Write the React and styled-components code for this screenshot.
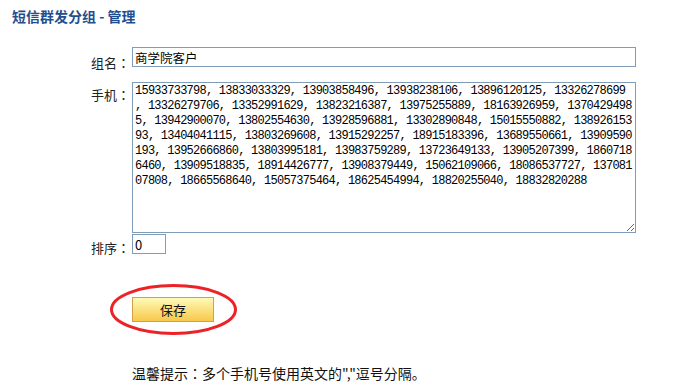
import React from "react";
import styled, { createGlobalStyle } from "styled-components";

const GlobalStyle = createGlobalStyle`
  html, body { margin: 0; padding: 0; background: #fff; }
  body { font-family: "Noto Sans CJK SC", "Noto Sans", sans-serif; color: #222; }
`;

const Page = styled.div`
  width: 692px;
  height: 386px;
  box-sizing: border-box;
  padding-top: 6px;
  overflow: hidden;
`;

const Title = styled.h1`
  margin: 0;
  padding-left: 12px;
  font-size: 14px;
  line-height: 21px;
  font-weight: bold;
  color: #1f4f8f;
`;

const Form = styled.form`
  margin-top: 20px;
  display: flex;
  flex-direction: column;
`;

const Row = styled.div`
  display: flex;
  align-items: flex-start;
  margin-top: ${(p) => p.$gap || 0}px;
`;

const Label = styled.label`
  box-sizing: border-box;
  flex: 0 0 132px;
  padding-right: 2px;
  padding-top: ${(p) => p.$offset || 0}px;
  text-align: right;
  font-size: 13px;
  line-height: 16px;
  color: #222;
`;

const Colon = styled.span`
  font-family: "Noto Sans CJK JP", "Noto Sans CJK SC", sans-serif;
`;

const TextField = styled.input`
  box-sizing: border-box;
  display: block;
  width: ${(p) => p.$w}px;
  height: 20px;
  margin: 0;
  padding: 0 2px;
  border: 1px solid #7f9db9;
  font-family: "Noto Sans CJK SC", sans-serif;
  font-size: ${(p) => p.$size || 12.5}px;
  color: #000;
  outline: none;
  background: #fff;
`;

const Numbers = styled.textarea`
  box-sizing: border-box;
  display: block;
  width: 504px;
  height: 151px;
  margin: 0;
  padding: 1px 2px;
  border: 1px solid #7f9db9;
  font-family: "Liberation Mono", monospace;
  font-size: 12px;
  letter-spacing: -0.75px;
  line-height: 15px;
  color: #000;
  white-space: pre;
  overflow: hidden;
  outline: none;
  background: #fff;
`;

const ButtonRow = styled.div`
  padding-left: 132px;
  margin-top: 40px;
`;

const Highlight = styled.div`
  position: relative;
  display: inline-block;
`;

const SaveButton = styled.button`
  display: block;
  width: 82px;
  height: 25px;
  padding: 0;
  border: 1px solid #d1a04a;
  background: linear-gradient(#fffab8, #f7c94a);
  font-family: "Noto Sans CJK SC", sans-serif;
  font-size: 13px;
  color: #111;
  cursor: pointer;
`;

const Circle = styled.svg`
  position: absolute;
  left: -22px;
  top: -13px;
  width: 127px;
  height: 51px;
  overflow: visible;
  pointer-events: none;
`;

const Tip = styled.p`
  margin: 41px 0 0;
  padding-left: 132px;
  font-size: 14px;
  line-height: 20px;
  color: #111;
`;

const phoneLines = [
  "15933733798, 13833033329, 13903858496, 13938238106, 13896120125, 13326278699",
  ", 13326279706, 13352991629, 13823216387, 13975255889, 18163926959, 1370429498",
  "5, 13942900070, 13802554630, 13928596881, 13302890848, 15015550882, 138926153",
  "93, 13404041115, 13803269608, 13915292257, 18915183396, 13689550661, 13909590",
  "193, 13952666860, 13803995181, 13983759289, 13723649133, 13905207399, 1860718",
  "6460, 13909518835, 18914426777, 13908379449, 15062109066, 18086537727, 137081",
  "07808, 18665568640, 15057375464, 18625454994, 18820255040, 18832820288",
].join("\n");

export default function App() {
  return (
    <Page>
      <GlobalStyle />
      <Title>短信群发分组 - 管理</Title>
      <Form onSubmit={(e) => e.preventDefault()}>
        <Row>
          <Label $offset={8}>组名<Colon>：</Colon></Label>
          <TextField $w={504} defaultValue="商学院客户" />
        </Row>
        <Row $gap={11}>
          <Label $offset={5}>手机<Colon>：</Colon></Label>
          <Numbers defaultValue={phoneLines} spellCheck={false} />
        </Row>
        <Row $gap={1}>
          <Label $offset={6}>排序<Colon>：</Colon></Label>
          <TextField $w={34} $size={13} defaultValue="0" />
        </Row>
        <ButtonRow>
          <Highlight>
            <SaveButton type="submit">保存</SaveButton>
            <Circle viewBox="0 0 127 51">
              <ellipse cx="63.5" cy="25.5" rx="62" ry="24" fill="none" stroke="#ec2227" strokeWidth="3" />
            </Circle>
          </Highlight>
        </ButtonRow>
      </Form>
      <Tip>温馨提示<Colon>：</Colon>多个手机号使用英文的","逗号分隔。</Tip>
    </Page>
  );
}
